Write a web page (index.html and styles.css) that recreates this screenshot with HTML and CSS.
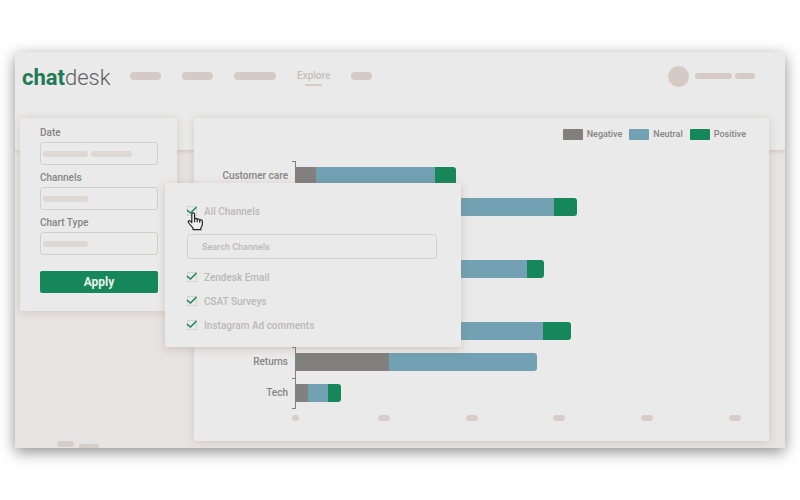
FILE: index.html
```html
<!DOCTYPE html>
<html lang="en">
<head>
    <meta charset="UTF-8">
    <meta name="viewport" content="width=device-width, initial-scale=1.0">
    <title>Chatdesk - Explore</title>
    <link rel="stylesheet" href="styles.css">
</head>
<body>
    <div class="app">
        <header>
            <a href="#" class="logo"><b>chat</b>desk</a>
            <nav>
                <a href="#" class="pill w31"></a>
                <a href="#" class="pill w31"></a>
                <a href="#" class="pill w42"></a>
                <a href="#" class="active">Explore</a>
                <a href="#" class="pill w21"></a>
            </nav>
            <div class="user">
                <span class="avatar"></span>
                <span class="name name-first"></span>
                <span class="name name-last"></span>
            </div>
        </header>

        <main>
            <div class="sidebar">
                <form class="card filters">
                    <label for="date">Date</label>
                    <div class="field">
                        <input type="text" id="date">
                        <div class="value"><span class="bar-long"></span><span class="bar-short"></span></div>
                    </div>
                    <label for="channels">Channels</label>
                    <div class="field">
                        <select id="channels"></select>
                        <div class="value"><span class="bar-long"></span></div>
                    </div>
                    <label for="type">Chart Type</label>
                    <div class="field">
                        <select id="type"></select>
                        <div class="value"><span class="bar-long"></span></div>
                    </div>
                    <button type="button">Apply</button>
                </form>
                <div class="footer-pills">
                    <span></span>
                    <span></span>
                </div>
            </div>

            <section class="card chart">
                <ul class="legend">
                    <li><i class="negative"></i>Negative</li>
                    <li><i class="neutral"></i>Neutral</li>
                    <li><i class="positive"></i>Positive</li>
                </ul>
                <div class="rows">
                    <div class="row">
                        <span class="label">Customer care</span><span class="tick"></span>
                        <div class="bar">
                            <i class="negative" style="width: 4.6%"></i><i class="neutral" style="width: 27.1%"></i><i class="positive" style="width: 4.8%"></i>
                        </div>
                    </div>
                    <div class="row">
                        <span class="label"></span><span class="tick"></span>
                        <div class="bar">
                            <i class="neutral" style="width: 58.8%"></i><i class="positive" style="width: 5.1%"></i>
                        </div>
                    </div>
                    <div class="row">
                        <span class="label"></span><span class="tick"></span>
                        <div class="bar"></div>
                    </div>
                    <div class="row">
                        <span class="label"></span><span class="tick"></span>
                        <div class="bar">
                            <i class="neutral" style="width: 52.6%"></i><i class="positive" style="width: 3.8%"></i>
                        </div>
                    </div>
                    <div class="row">
                        <span class="label"></span><span class="tick"></span>
                        <div class="bar"></div>
                    </div>
                    <div class="row">
                        <span class="label"></span><span class="tick"></span>
                        <div class="bar">
                            <i class="neutral" style="width: 56.2%"></i><i class="positive" style="width: 6.5%"></i>
                        </div>
                    </div>
                    <div class="row">
                        <span class="label">Returns</span><span class="tick"></span>
                        <div class="bar">
                            <i class="negative" style="width: 21.2%"></i><i class="neutral" style="width: 33.8%"></i>
                        </div>
                    </div>
                    <div class="row">
                        <span class="label">Tech</span><span class="tick last"></span>
                        <div class="bar">
                            <i class="negative" style="width: 2.7%"></i><i class="neutral" style="width: 4.5%"></i><i class="positive" style="width: 3%"></i>
                        </div>
                    </div>
                </div>
                <div class="scale">
                    <span></span><span></span><span></span><span></span><span></span><span></span>
                </div>
            </section>

            <div class="dropdown">
                <label class="option">
                    <span class="check">
                        <input type="checkbox" checked>
                        <svg width="12" height="12" viewBox="0 0 12 12"><path d="M1 5 4.5 8 10.5 2"/></svg>
                    </span>
                    All Channels
                </label>
                <input type="text" class="search" placeholder="Search Channels" aria-label="Search Channels">
                <label class="option">
                    <span class="check">
                        <input type="checkbox" checked>
                        <svg width="12" height="12" viewBox="0 0 12 12"><path d="M1 5 4.5 8 10.5 2"/></svg>
                    </span>
                    Zendesk Email
                </label>
                <label class="option">
                    <span class="check">
                        <input type="checkbox" checked>
                        <svg width="12" height="12" viewBox="0 0 12 12"><path d="M1 5 4.5 8 10.5 2"/></svg>
                    </span>
                    CSAT Surveys
                </label>
                <label class="option">
                    <span class="check">
                        <input type="checkbox" checked>
                        <svg width="12" height="12" viewBox="0 0 12 12"><path d="M1 5 4.5 8 10.5 2"/></svg>
                    </span>
                    Instagram Ad comments
                </label>
                <!-- hand pointer -->
                <svg class="pointer" width="17" height="19" viewBox="0 0 16 18">
                    <path d="M4.5 10V2.2c0-1.8 2.6-1.8 2.6 0V7c.2-1.3 2.3-1.2 2.5.3.4-1.2 2.3-.9 2.4.6.6-.9 2.5-.5 2.5 1v2.6c0 1.6-1.2 2.4-1.4 3.8v1.4H5.7v-1.2C5 14 3 12.5 1.4 10.2c-1-1.5.8-2.6 1.9-1.4z"/>
                    <path d="M7.1 7v2.6M9.6 7.3v2.5M12 7.9v2.2"/>
                </svg>
            </div>
        </main>
    </div>
</body>
</html>
```
FILE: styles.css
```css
* {
    box-sizing: border-box;
}

body {
    margin: 0;
    padding: 52px 15px;
    background: #fff;
    font-family: Roboto, Arial, sans-serif;
    font-size: 10px;
    font-weight: 500;
    color: #858585;
}

.app {
    background: #e6e4e2;
    box-shadow: 0 4px 14px rgba(0, 0, 0, 0.45);
    overflow: hidden;
}

/* Header */
header {
    display: flex;
    align-items: flex-start;
    height: 98px;
    padding: 8px 30px 0 7px;
    background: #eaeaea;
    box-shadow: 0 1px 4px rgba(150, 110, 90, 0.3);
}

.logo {
    width: 88px;
    margin-right: 20px;
    font-size: 22px;
    line-height: 36px;
    font-weight: 300;
    color: #606060;
    text-decoration: none;
}

.logo b {
    font-weight: 700;
    color: #1f7a55;
}

nav {
    display: flex;
    align-items: center;
    gap: 21px;
    height: 32px;
}

.pill {
    height: 8px;
    border-radius: 4px;
    background: #d5cac5;
}

.w21 {
    width: 21px;
}

.w31 {
    width: 31px;
}

.w42 {
    width: 42px;
}

.active {
    display: flex;
    flex-direction: column;
    align-items: center;
    padding-top: 2px;
    line-height: 16px;
    color: #c3bfbd;
    text-decoration: none;
}

.active::after {
    content: "";
    width: 17px;
    height: 2px;
    background: #d5cac5;
}

.user {
    display: flex;
    align-items: center;
    gap: 3px;
    height: 32px;
    margin-left: auto;
}

.avatar {
    width: 21px;
    height: 21px;
    margin-right: 3px;
    border-radius: 50%;
    background: #d5cac5;
}

.name {
    height: 6px;
    border-radius: 3px;
    background: #d5cac5;
}

.name-first {
    width: 37px;
}

.name-last {
    width: 20px;
}

/* Content */
main {
    position: relative;
    display: flex;
    gap: 17px;
    margin-top: -32px;
    padding: 0 16px 7px 5px;
}

.card {
    background: #eaeaea;
    border-radius: 2px;
    box-shadow: 0 1px 8px rgba(150, 110, 90, 0.25);
}

.sidebar {
    display: flex;
    flex-direction: column;
    justify-content: space-between;
    width: 157px;
}

.filters {
    display: flex;
    flex-direction: column;
    padding: 6px 19px 18px 20px;
}

.filters > label {
    line-height: 18px;
}

.field {
    display: grid;
    height: 23px;
    margin-bottom: 4px;
}

.field > * {
    grid-area: 1 / 1;
}

.field input,
.field select {
    appearance: none;
    width: 100%;
    border: 1px solid #d2d0ce;
    border-radius: 3px;
    background: transparent;
}

.value {
    display: flex;
    align-items: center;
    gap: 3px;
    padding-left: 3px;
    pointer-events: none;
}

.value span {
    height: 6px;
    border-radius: 3px;
    background: #ddd8d4;
}

.bar-long {
    width: 45px;
}

.bar-short {
    width: 41px;
}

.filters button {
    height: 22px;
    margin-top: 12px;
    padding: 0;
    border: none;
    border-radius: 2px;
    background: #16875a;
    color: #e8f1ec;
    font: 700 12px Roboto, Arial, sans-serif;
    cursor: pointer;
}

.footer-pills {
    display: flex;
    gap: 5px;
    height: 7px;
    margin: 0 0 -7px 37px;
}

.footer-pills span {
    flex: none;
    width: 17px;
    height: 6px;
    border-radius: 3px;
    background: #d5cec8;
}

.footer-pills span:last-child {
    width: 20px;
    margin-top: 3px;
}

/* Chart */
.chart {
    flex: 1;
    padding: 8px 34px 20px 0;
}

.legend {
    display: flex;
    justify-content: flex-end;
    gap: 7px;
    margin: 0 -11px 0 0;
    padding: 0;
    list-style: none;
    font-size: 9px;
    line-height: 16px;
}

.legend li {
    display: flex;
    align-items: center;
    gap: 4px;
}

.legend i {
    width: 20px;
    height: 11px;
    border-radius: 1px;
}

.negative {
    background: #81807f;
}

.neutral {
    background: #71a1b2;
}

.positive {
    background: #16875a;
}

.rows {
    margin-top: 19px;
}

.row {
    display: flex;
    height: 31px;
}

.label {
    width: 94px;
    line-height: 30px;
    text-align: right;
}

.tick {
    width: 3px;
    margin-left: 4px;
    border-top: 1px solid #81807f;
}

.last {
    border-bottom: 1px solid #81807f;
}

.bar {
    display: flex;
    flex: 1;
    padding: 6px 0 7px;
    border-left: 1px solid #81807f;
}

.bar i:last-child {
    border-radius: 0 3px 3px 0;
}

.scale {
    display: flex;
    justify-content: space-between;
    margin: 6px -6px 0 95px;
}

.scale span {
    width: 12px;
    height: 6px;
    border-radius: 3px;
    background: #d8cdc9;
}

.scale span:first-child {
    width: 7px;
    margin: 0 3px;
}

/* Channel dropdown */
.dropdown {
    position: absolute;
    top: 65px;
    left: 150px;
    display: flex;
    flex-direction: column;
    width: 296px;
    padding: 16px 24px 10px 21px;
    background: #eaeaea;
    border-radius: 1px;
    box-shadow: 0 2px 8px rgba(150, 110, 90, 0.3);
    color: #bab8b8;
}

.option {
    display: flex;
    align-items: center;
    gap: 6px;
    height: 24px;
}

.check {
    display: grid;
    width: 12px;
}

.check > * {
    grid-area: 1 / 1;
}

.check input {
    appearance: none;
    width: 10px;
    height: 10px;
    margin: 1px;
    border: 1px solid #cbd8d2;
}

.check svg {
    pointer-events: none;
}

.check path {
    fill: none;
    stroke: #24805a;
    stroke-width: 1.5;
}

.search {
    height: 25px;
    margin: 11px 0 6px 1px;
    padding: 0 14px;
    border: 1px solid #d2d3d3;
    border-radius: 3px;
    background: transparent;
    font: 500 9px Roboto, Arial, sans-serif;
}

.search::placeholder {
    color: #bab8b8;
}

.pointer {
    position: absolute;
    top: 29px;
    left: 22px;
    fill: #eee;
    stroke: #222;
    stroke-width: 1.1;
    stroke-linejoin: round;
}
```
